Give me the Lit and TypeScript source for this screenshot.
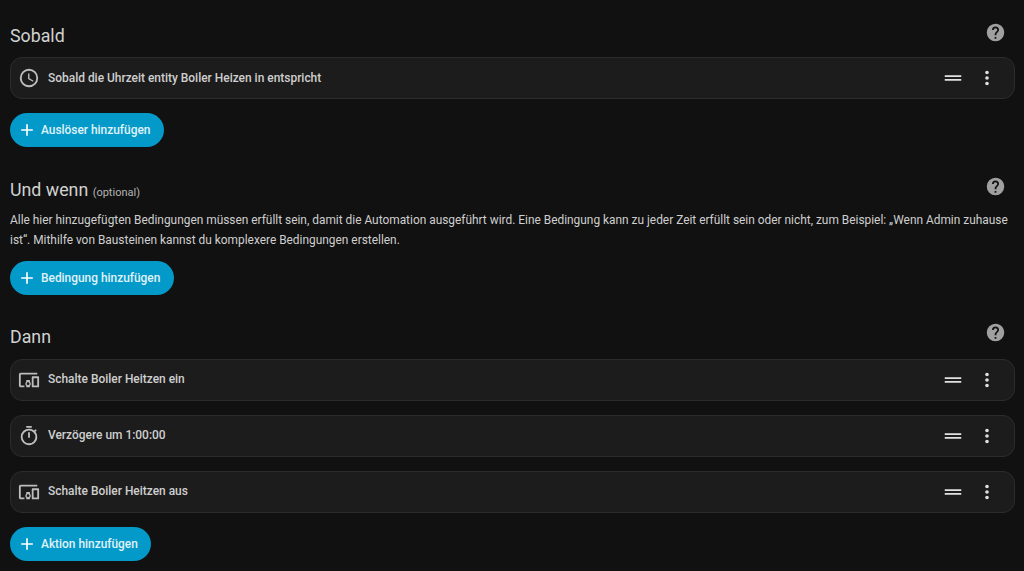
import { LitElement, html, css, svg } from "lit";
import { customElement } from "lit/decorators.js";

const mdi = {
  clock:
    "M12,20A8,8 0 0,0 20,12A8,8 0 0,0 12,4A8,8 0 0,0 4,12A8,8 0 0,0 12,20M12,2A10,10 0 0,1 22,12A10,10 0 0,1 12,22C6.47,22 2,17.5 2,12A10,10 0 0,1 12,2M12.5,7V12.25L17,14.92L16.25,16.15L11,13V7H12.5Z",
  devices:
    "M3 6H21V4H3C1.9 4 1 4.9 1 6V18C1 19.1 1.9 20 3 20H7V18H3V6M13 12H9V13.78C8.39 14.33 8 15.11 8 16C8 16.89 8.39 17.67 9 18.22V20H13V18.22C13.61 17.67 14 16.88 14 16S13.61 14.33 13 13.78V12M11 17.5C10.17 17.5 9.5 16.83 9.5 16S10.17 14.5 11 14.5 12.5 15.17 12.5 16 11.83 17.5 11 17.5M22 8H16C15.5 8 15 8.5 15 9V19C15 19.5 15.5 20 16 20H22C22.5 20 23 19.5 23 19V9C23 8.5 22.5 8 22 8M21 18H17V10H21V18Z",
  timer:
    "M12,20A7,7 0 0,1 5,13A7,7 0 0,1 12,6A7,7 0 0,1 19,13A7,7 0 0,1 12,20M19.03,7.39L20.45,5.97C20,5.46 19.55,5 19.04,4.56L17.62,6C16.07,4.74 14.12,4 12,4A9,9 0 0,0 3,13A9,9 0 0,0 12,22C17,22 21,17.97 21,13C21,10.88 20.26,8.93 19.03,7.39M11,14H13V8H11M15,1H9V3H15V1Z",
  help:
    "M15.07,11.25L14.17,12.17C13.45,12.89 13,13.5 13,15H11V14.5C11,13.39 11.45,12.39 12.17,11.67L13.41,10.41C13.78,10.05 14,9.55 14,9C14,7.89 13.1,7 12,7A2,2 0 0,0 10,9H8A4,4 0 0,1 12,5A4,4 0 0,1 16,9C16,9.88 15.64,10.67 15.07,11.25M13,19H11V17H13M12,2A10,10 0 0,0 2,12A10,10 0 0,0 12,22A10,10 0 0,0 22,12C22,6.47 17.5,2 12,2Z",
  drag: "M21 11H3V9H21V11M21 13H3V15H21V13Z",
  dots:
    "M12,16A2,2 0 0,1 14,18A2,2 0 0,1 12,20A2,2 0 0,1 10,18A2,2 0 0,1 12,16M12,10A2,2 0 0,1 14,12A2,2 0 0,1 12,14A2,2 0 0,1 10,12A2,2 0 0,1 12,10M12,4A2,2 0 0,1 14,6A2,2 0 0,1 12,8A2,2 0 0,1 10,6A2,2 0 0,1 12,4Z",
  plus: "M19,13H13V19H11V13H5V11H11V5H13V11H19V13Z",
};

const icon = (d: string, cls: string) => html`<svg class=${cls} viewBox="0 0 24 24">${svg`<path d=${d}></path>`}</svg>`;

@customElement("app-root")
export class AppRoot extends LitElement {
  static styles = css`
    :host {
      display: block;
      height: 571px;
      overflow: hidden;
      background: #111111;
      color: #e1e1e1;
      font-family: Roboto, sans-serif;
      padding: 0 9px 0 10px;
      box-sizing: border-box;
    }

    .header {
      display: flex;
      align-items: center;
      justify-content: space-between;
      height: 24px;
    }

    .title {
      font-size: 17.8px;
      font-weight: 400;
      line-height: 24px;
      margin: 0;
      color: #d2d2d2;
    }

    .first .title {
      margin-top: 2px;
    }

    .optional {
      font-size: 11px;
      color: #b4b4b4;
    }

    .help {
      width: 21px;
      height: 21px;
      fill: #a0a0a0;
      margin: -6px 9px 0 0;
    }

    .second .help,
    .third .help {
      margin-top: -10px;
    }

    .desc {
      font-size: 11.9px;
      line-height: 20px;
      margin: 6.5px 0 0;
      color: #cfcfcf;
    }

    .first { padding-top: 23px; }
    .second { padding-top: 32px; }
    .third { padding-top: 30px; }

    .cards {
      display: flex;
      flex-direction: column;
      gap: 14px;
      margin-top: 10px;
    }

    .card {
      display: flex;
      align-items: center;
      height: 42px;
      box-sizing: border-box;
      background: #1c1c1c;
      border: 1px solid #2c2c2c;
      border-radius: 12px;
      padding: 0 16px 0 7px;
    }

    .card .lead {
      width: 22px;
      height: 22px;
      fill: #bdbdbd;
      flex: none;
    }

    .label {
      flex: 1;
      margin-left: 8px;
      font-size: 11.95px;
      font-weight: 500;
      color: #cfcfcf;
    }

    .third .label {
      margin-top: -2px;
    }

    .drag {
      width: 22px;
      height: 22px;
      fill: #e1e1e1;
    }

    .dots {
      width: 22px;
      height: 22px;
      fill: #e1e1e1;
      margin-left: 12px;
    }

    .add {
      display: inline-flex;
      align-items: center;
      height: 34px;
      margin-top: 14px;
      padding: 0 13.5px 0 7px;
      border: none;
      border-radius: 17px;
      background: #039ac9;
      color: #e0f2f8;
      font-family: inherit;
      font-size: 11.9px;
      font-weight: 500;
    }

    .add.tight { margin-top: 11.5px; }

    .add svg {
      width: 20px;
      height: 20px;
      fill: #ffffff;
      margin-right: 4px;
    }
  `;

  private _card(d: string, text: string) {
    return html`<div class="card">
      ${icon(d, "lead")}
      <span class="label">${text}</span>
      ${icon(mdi.drag, "drag")} ${icon(mdi.dots, "dots")}
    </div>`;
  }

  private _add(text: string, tight = false) {
    return html`<button class="add ${tight ? "tight" : ""}">${icon(mdi.plus, "")}${text}</button>`;
  }

  render() {
    return html`
      <section class="first">
        <div class="header">
          <h2 class="title">Sobald</h2>
          ${icon(mdi.help, "help")}
        </div>
        <div class="cards">${this._card(mdi.clock, "Sobald die Uhrzeit entity Boiler Heizen in entspricht")}</div>
        ${this._add("Auslöser hinzufügen")}
      </section>
      <section class="second">
        <div class="header">
          <h2 class="title">Und wenn <span class="optional">(optional)</span></h2>
          ${icon(mdi.help, "help")}
        </div>
        <p class="desc">
          Alle hier hinzugefügten Bedingungen müssen erfüllt sein, damit die Automation ausgeführt wird. Eine Bedingung
          kann zu jeder Zeit erfüllt sein oder nicht, zum Beispiel: „Wenn Admin zuhause ist“. Mithilfe von Bausteinen
          kannst du komplexere Bedingungen erstellen.
        </p>
        ${this._add("Bedingung hinzufügen", true)}
      </section>
      <section class="third">
        <div class="header">
          <h2 class="title">Dann</h2>
          ${icon(mdi.help, "help")}
        </div>
        <div class="cards">
          ${this._card(mdi.devices, "Schalte Boiler Heitzen ein")}
          ${this._card(mdi.timer, "Verzögere um 1:00:00")}
          ${this._card(mdi.devices, "Schalte Boiler Heitzen aus")}
        </div>
        ${this._add("Aktion hinzufügen")}
      </section>
    `;
  }
}
